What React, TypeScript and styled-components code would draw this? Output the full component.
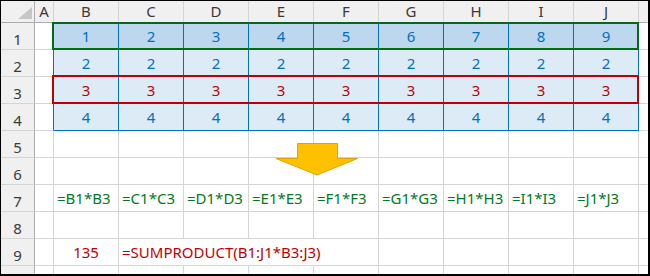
import styled, { createGlobalStyle } from "styled-components";

const GlobalStyle = createGlobalStyle`
  body {
    margin: 0;
    background: #fff;
  }
`;

const GRID = "#d4d4d4";
const HEAD_BG = "#f0f0f0";
const HEAD_EDGE = "#acacac";
const BLUE = "#0070c0";
const RED = "#c00000";
const GREEN = "#007a1e";

const LETTERS = ["A", "B", "C", "D", "E", "F", "G", "H", "I", "J"];
const DATA_COLS = LETTERS.slice(1);

const Sheet = styled.div`
  position: relative;
  width: 650px;
  height: 276px;
  box-sizing: border-box;
  border: solid #000;
  border-width: 1px 2px 2px 1px;
  overflow: hidden;
  font-family: "Noto Sans", "Open Sans", sans-serif;
`;

const Grid = styled.div`
  display: grid;
  grid-template-columns: 34px 19px repeat(9, 65px) 9px;
  grid-template-rows: 22px repeat(9, 27px) 8px;
`;

type Place = { $r: number; $c: number };

const Corner = styled.div`
  grid-row: 1;
  grid-column: 1;
  box-sizing: border-box;
  display: flex;
  justify-content: flex-end;
  align-items: flex-end;
  padding: 0 2px 3px 0;
  background: ${HEAD_BG};
  border-right: 1px solid ${HEAD_EDGE};
  border-bottom: 1px solid ${HEAD_EDGE};
`;

const ColHead = styled.div<Place & { $open?: boolean }>`
  grid-row: ${(p) => p.$r};
  grid-column: ${(p) => p.$c};
  box-sizing: border-box;
  display: flex;
  align-items: center;
  justify-content: center;
  background: ${HEAD_BG};
  border-right: 1px solid ${(p) => (p.$open ? "transparent" : GRID)};
  border-bottom: 1px solid ${HEAD_EDGE};
  color: #3a3a3a;
  font-size: 15px;
  padding-bottom: 1px;
`;

const RowHead = styled.div<Place & { $last?: boolean }>`
  grid-row: ${(p) => p.$r};
  grid-column: ${(p) => p.$c};
  box-sizing: border-box;
  display: flex;
  align-items: center;
  justify-content: center;
  padding-top: 6px;
  background: ${HEAD_BG};
  border-right: 1px solid ${HEAD_EDGE};
  border-bottom: 1px solid ${(p) => (p.$last ? "transparent" : GRID)};
  color: #3a3a3a;
  font-size: 15px;
`;

type CellProps = Place & {
  $fill?: string;
  $right?: string;
  $bottom?: string;
  $ink?: string;
  $left?: boolean;
};

const Cell = styled.div<CellProps>`
  grid-row: ${(p) => p.$r};
  grid-column: ${(p) => p.$c};
  box-sizing: border-box;
  min-width: 0;
  display: flex;
  align-items: center;
  justify-content: ${(p) => (p.$left ? "flex-start" : "center")};
  padding-left: ${(p) => (p.$left ? "3px" : "0")};
  background: ${(p) => p.$fill ?? "transparent"};
  border-right: 1px solid ${(p) => p.$right ?? GRID};
  border-bottom: 1px solid ${(p) => p.$bottom ?? GRID};
  color: ${(p) => p.$ink ?? "#000"};
  font-size: 15px;
  white-space: nowrap;
`;

const RowFrame = styled.div<{ $r: number; $color: string; $lift: number }>`
  grid-row: ${(p) => p.$r};
  grid-column: 3 / 12;
  margin: -${(p) => p.$lift}px 0 0 -2px;
  border: 2px solid ${(p) => p.$color};
  pointer-events: none;
`;

const DownArrow = styled.svg`
  position: absolute;
  left: 274px;
  top: 142px;
`;

// sheet rows 1..4 hold the blue block, 7 the formulas, 9 the total
const blockRows: { values: string[]; fill: string; ink: string }[] = [
  { values: ["1", "2", "3", "4", "5", "6", "7", "8", "9"], fill: "#bdd7ee", ink: BLUE },
  { values: Array(9).fill("2"), fill: "#ddebf7", ink: BLUE },
  { values: Array(9).fill("3"), fill: "#ddebf7", ink: RED },
  { values: Array(9).fill("4"), fill: "#ddebf7", ink: BLUE },
];

const App = () => {
  const rows = [];

  for (let n = 1; n <= 10; n++) {
    const r = n + 1;
    const last = n === 10;
    rows.push(
      <RowHead key={`h${n}`} $r={r} $c={1} $last={last}>
        {last ? "" : n}
      </RowHead>
    );

    const block = n <= 4 ? blockRows[n - 1] : null;

    // column A
    rows.push(
      <Cell
        key={`a${n}`}
        $r={r}
        $c={2}
        $right={block ? BLUE : GRID}
        $bottom={last ? "transparent" : GRID}
      />
    );

    DATA_COLS.forEach((col, i) => {
      const c = i + 3;
      let text = "";
      let ink: string | undefined;
      let left = false;
      let right: string | undefined;

      if (block) {
        text = block.values[i];
        ink = block.ink;
        right = BLUE;
      } else if (n === 7) {
        text = `=${col}1*${col}3`;
        ink = GREEN;
        left = true;
      } else if (n === 9) {
        if (col === "B") {
          text = "135";
          ink = RED;
        } else if (col === "C") {
          text = "=SUMPRODUCT(B1:J1*B3:J3)";
          ink = RED;
          left = true;
        }
        if (col === "C" || col === "D" || col === "E") right = "transparent";
      }

      rows.push(
        <Cell
          key={`${col}${n}`}
          $r={r}
          $c={c}
          $fill={block?.fill}
          $ink={ink}
          $left={left}
          $right={right}
          $bottom={block ? BLUE : last ? "transparent" : GRID}
        >
          {text}
        </Cell>
      );
    });

    // narrow sliver of column K at the right edge
    rows.push(
      <Cell
        key={`k${n}`}
        $r={r}
        $c={12}
        $right="transparent"
        $bottom={last ? "transparent" : GRID}
      />
    );
  }

  return (
    <>
      <GlobalStyle />
      <Sheet>
        <Grid>
          <Corner>
            <svg width="14" height="12" viewBox="0 0 14 12">
              <polygon points="14,0 14,12 0,12" fill="#c6c6c6" />
            </svg>
          </Corner>
          {LETTERS.map((l, i) => (
            <ColHead key={l} $r={1} $c={i + 2}>
              {l}
            </ColHead>
          ))}
          <ColHead $r={1} $c={12} $open />
          {rows}
          <RowFrame $r={2} $color="#006a14" $lift={1} />
          <RowFrame $r={4} $color={RED} $lift={2} />
        </Grid>
        <DownArrow width="84" height="34" viewBox="0 0 84 34">
          <polygon
            points="22.5,0.5 62.5,0.5 62.5,15.5 82.5,15.5 42,32 1,15.5 22.5,15.5"
            fill="#ffc000"
            stroke="#dfa400"
            strokeWidth="1"
          />
        </DownArrow>
      </Sheet>
    </>
  );
};

export default App;
